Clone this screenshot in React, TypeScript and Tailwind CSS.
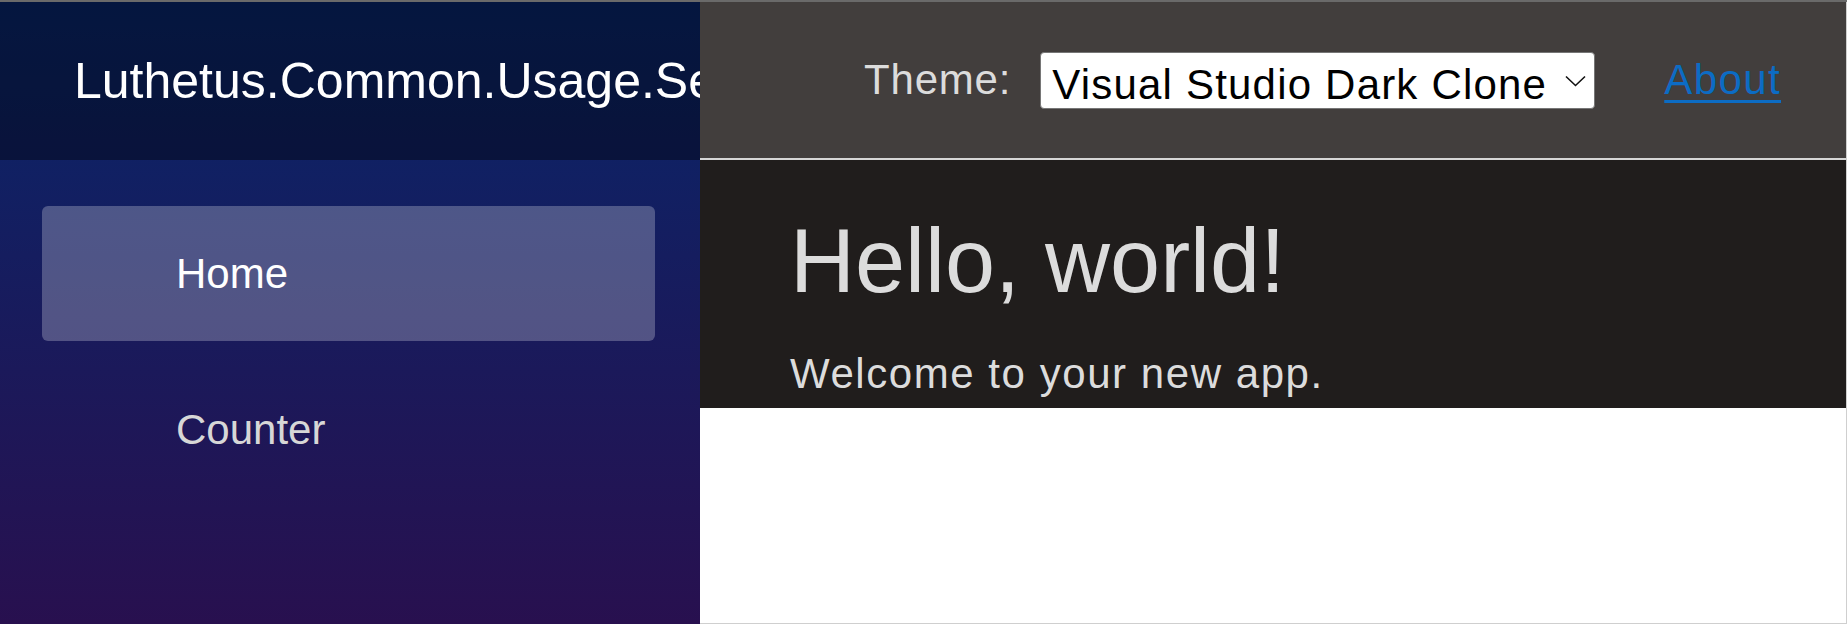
import React from "react";

export default function App() {
  return (
    <div className="flex h-screen w-full overflow-hidden border-t-2 border-[#6a6a6a] font-['Liberation_Sans',Arial,sans-serif]">
      {/* Sidebar */}
      <div className="flex w-[700px] shrink-0 flex-col bg-[linear-gradient(180deg,#08266a_0%,#28104f_100%)]">
        <div className="flex h-[158px] items-center overflow-hidden whitespace-nowrap bg-black/40 pl-[74px]">
          <span className="text-[50px] leading-[60px] text-white">
            Luthetus.Common.Usage.ServerSide
          </span>
        </div>
        <nav className="flex flex-col pt-[46px]">
          <a className="ml-[42px] mr-[45px] flex h-[135px] items-center rounded-[6px] bg-white/25 pl-[134px] text-[42px] leading-[63px] text-white">
            Home
          </a>
          <a className="ml-[42px] mr-[45px] mt-[21px] flex h-[135px] items-center rounded-[6px] pl-[134px] text-[42px] leading-[63px] text-[#d7d7d7]">
            Counter
          </a>
        </nav>
      </div>

      {/* Main */}
      <div className="flex min-w-0 flex-1 flex-col border-b border-r border-[#cfcfcf] bg-white">
        <div className="flex h-[158px] items-center justify-end border-b-2 border-[#d6d6d6] bg-[#423e3d] pr-[65px]">
          <span className="text-[42px] leading-[50px] tracking-[0.8px] text-[#dcdcdc]">Theme:</span>
          <div className="relative ml-[29px] h-[57px] w-[555px]">
            <select
              defaultValue="vsdark"
              className="h-full w-full appearance-none rounded-[4px] border border-[#767676] bg-white pl-[11px] text-[42px] tracking-[1.2px] text-black outline-none"
            >
              <option value="vsdark">Visual Studio Dark Clone</option>
              <option value="vslight">Visual Studio Light Clone</option>
            </select>
            <svg
              className="pointer-events-none absolute right-[9px] top-[23px]"
              width="21"
              height="12"
              viewBox="0 0 21 12"
              fill="none"
            >
              <path d="M1 1.5 L10.5 10.5 L20 1.5" stroke="#111" strokeWidth="1.6" />
            </svg>
          </div>
          <a className="ml-[69px] text-[42px] leading-[50px] tracking-[1.4px] text-[#0c6cc4] underline decoration-[3px] underline-offset-[6px]">
            About
          </a>
        </div>
        <div className="bg-[#201d1c] pb-[3px] pl-[90px] pt-[46px]">
          <h1 className="text-[90px] leading-[110px] text-[#dcdcdc]">Hello, world!</h1>
          <p className="mt-[26px] text-[42px] leading-[63px] tracking-[1.55px] text-[#dcdcdc]">
            Welcome to your new app.
          </p>
        </div>
        <div className="flex-1 bg-white" />
      </div>
    </div>
  );
}
